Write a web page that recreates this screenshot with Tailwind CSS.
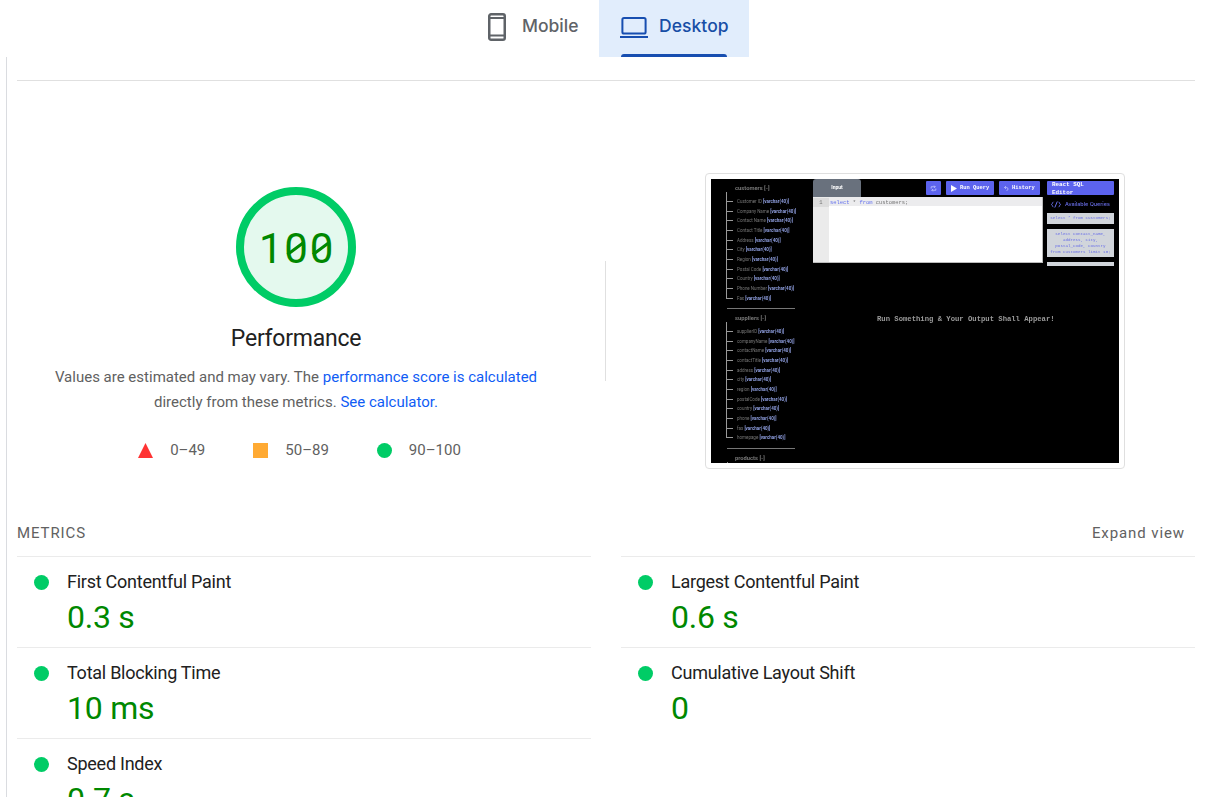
<!DOCTYPE html>
<html lang="en">
<head>
<meta charset="utf-8">
<title>PageSpeed report</title>
<script src="https://cdn.jsdelivr.net/npm/@tailwindcss/browser@4"></script>
</head>
<body class="bg-white h-[797px] overflow-hidden font-['Roboto',sans-serif] text-[#212121]">
<div class="flex h-[797px] flex-col overflow-hidden">
  <nav class="flex h-[57px] shrink-0 pl-[467px] font-['Inter',sans-serif] text-[17.5px] font-medium">
    <div class="flex w-[132px] pl-[21px] text-[#5f6368]">
      <svg class="mt-[13px] h-7 w-[18px]" viewBox="0 0 18 28" fill="none" stroke="currentColor"><rect x="1.25" y="1.25" width="15.5" height="25.5" rx="1.8" stroke-width="2.5"/><path d="M1 5h16M1 22.6h16" stroke-width="2"/></svg>
      <span class="ml-4 mt-[13px] leading-[26px]">Mobile</span>
    </div>
    <div class="flex w-[150px] flex-col justify-between bg-[#e1edfc] text-[#174ea6]">
      <div class="flex pl-[21px] pt-[13px]">
        <svg class="mt-1 h-[22px] w-7" viewBox="0 0 28 22" fill="none" stroke="#174eb0" stroke-width="2"><rect x="2.4" y="1" width="23.2" height="15.6" rx="1.6"/><path d="M0 20h28"/></svg>
        <span class="ml-[11px] leading-[26px] tracking-[0.05px]">Desktop</span>
      </div>
      <div class="ml-[22px] h-[3px] w-[106px] rounded-t-[3px] bg-[#174eb0]"></div>
    </div>
  </nav>

  <main class="ml-[6px] flex-1 border-l border-[#dadce0] pl-[10px]">
    <div class="mt-[23px] w-[1178px] border-t border-[#e0e0e0]"></div>
    <section class="flex h-[444px]">
      <div class="flex w-[558px] flex-col items-center pt-[106px]">
        <div class="relative flex size-[120px] items-center justify-center rounded-full border-8 border-[#00cc66] bg-[#e4f9ee] pl-[2px] pt-[3px] text-[42px] leading-none tracking-[1.8px] text-[#008800]">100
          <svg class="absolute inset-0 size-[104px]" viewBox="0 0 104 104" stroke="#080" stroke-width="3"><path d="M43.5 59.5 59 48M69 59.5 84.5 48"/></svg>
        </div>
        <h1 class="mt-[18px] text-[23px] leading-[28px] tracking-[-0.25px]">Performance</h1>
        <p class="mt-[12px] text-center text-[15px] leading-[25px] text-[#616161]">Values are estimated and may vary. The <a class="text-[#0f5cf5]">performance score is calculated</a><br>directly from these metrics. <a class="text-[#0f5cf5]">See calculator.</a></p>
        <div class="mt-[22px] flex gap-12 pl-[7px] text-[15px] leading-[26px] text-[#616161]">
          <div class="flex items-center gap-[17px]"><svg class="size-[15px]" viewBox="0 0 15 15"><path d="M7.5 0 15 15H0z" fill="#f33"/></svg>0–49</div>
          <div class="flex items-center gap-[17px]"><span class="size-[15px] bg-[#ffaa33]"></span>50–89</div>
          <div class="flex items-center gap-[17px]"><span class="size-[15px] rounded-full bg-[#00cc66]"></span>90–100</div>
        </div>
      </div>
      <div class="ml-[30px] mt-[180px] h-[120px] w-px bg-[#e0e0e0]"></div>
      <div class="ml-[99px] mt-[92px] h-[296px] w-[420px] rounded border border-[#dfdfdf] p-[5px]">
        <div class="h-[284px] w-[408px] overflow-hidden bg-black">
        <div class="flex h-[284px] blur-[0.35px]">
          <aside class="w-[102px] shrink-0 pl-[15px] pt-[5px] font-['Roboto',sans-serif] text-[#777]">
            <div class="pl-[9px] text-[5.8px] font-bold leading-[8px]">customers [-]</div>
            <div id="customers" class="flex h-[115px] flex-col pt-[5px]"></div>
            <div class="ml-px mt-px h-px w-[68px] bg-[#777]"></div>
            <div class="mt-[5px] pl-[9px] text-[5.8px] font-bold leading-[8px]">suppliers [-]</div>
            <div id="suppliers" class="flex h-[121px] flex-col pt-[5px]"></div>
            <div class="ml-px mt-[5px] h-px w-[68px] bg-[#777]"></div>
            <div class="mt-[5px] pl-[9px] text-[5.8px] font-bold leading-[8px]">products [-]</div>
            <div class="ml-[1px] h-1 w-px bg-[#888]"></div>
          </aside>
          <div class="w-[230px] shrink-0 font-['Liberation_Mono',monospace]">
            <div class="flex h-[18px] text-[5.4px] font-bold text-white">
              <div class="flex w-12 items-center justify-center rounded-t-[3px] bg-[#69717d] font-['Roboto',sans-serif] text-[5px]">Input</div>
              <div class="ml-[65px] mt-[2px] flex h-[14px] w-[15px] items-center justify-center rounded-[1px] bg-[#5c63ee]"><svg class="size-[7px]" viewBox="0 0 12 12" fill="none" stroke="#c8ccff" stroke-width="1.3"><path d="M2 6V3h7M7 1l2 2-2 2M10 6v3H3M5 7 3 9l2 2"/></svg></div>
              <div class="ml-[5px] mt-[2px] flex h-[14px] w-12 items-center gap-[3px] rounded-[1px] bg-[#5c63ee] pl-[5px] whitespace-nowrap"><svg class="h-[7px] w-[6px]" viewBox="0 0 6 7"><path d="M0 0l6 3.5L0 7z" fill="#fff"/></svg>Run Query</div>
              <div class="ml-[5px] mt-[2px] flex h-[14px] w-[41px] items-center gap-[3px] rounded-[1px] bg-[#5c63ee] pl-[5px]"><svg class="size-[5px]" viewBox="0 0 10 10" fill="none" stroke="#c8ccff" stroke-width="1.4"><path d="M4 0 1 3l3 3M1 3h4a3 3 0 0 1 0 6"/></svg>History</div>
            </div>
            <div class="flex h-[66px] border-r border-b border-[#bbb] bg-white text-[5.45px]">
              <div class="w-4 bg-[#ebebeb] text-center leading-[9px] text-[#777]"><div class="mt-px bg-[#dcdcdc]">1</div></div>
              <div class="flex-1"><div class="h-[9px] whitespace-pre bg-[#ececee] pl-px pt-px leading-[9px] text-[#777]"><span class="text-[#6673ee]">select</span> * <span class="text-[#6673ee]">from</span> customers;</div></div>
            </div>
            <div class="mt-[51px] whitespace-nowrap pl-[64px] text-[7.23px] font-bold leading-[10px] text-[#9b9b9b]">Run Something &amp; Your Output Shall Appear!</div>
          </div>
          <div class="ml-1 mt-[2px] w-[67px] font-['Liberation_Mono',monospace] text-[4.2px] text-[#686ee8]">
            <div class="h-[14px] overflow-hidden rounded-[1px] bg-[#5c63ee] pl-[5px] text-[5.9px] font-bold leading-[8px] text-white"><div class="-mt-[0.5px]">React SQL<br>Editor</div></div>
            <div class="mt-[4px] flex h-[10px] items-center gap-[4px] whitespace-nowrap pl-[4px] font-['Inter',sans-serif] text-[5.4px] font-medium"><svg class="h-[7px] w-[10px]" viewBox="0 0 10 7" fill="none" stroke="currentColor"><path d="M2.5.8C.8 2 1.8 3 .5 3.5 1.8 4 .8 5 2.5 6.2M7.5.8C9.2 2 8.2 3 9.5 3.5 8.2 4 9.2 5 7.5 6.2M6.3.5 3.8 6.5"/></svg>Available Queries</div>
            <div class="mt-[4px] h-[11px] whitespace-nowrap bg-[#d1d5db] text-center leading-[11px]">select * from customers;</div>
            <div class="mt-[5px] h-[28px] whitespace-nowrap bg-[#d1d5db] pt-[2px] text-center leading-[6px]">select contact_name,<br>address, city,<br>postal_code, country<br>from customers limit 10;</div>
            <div class="mt-[5px] h-1 bg-[#d1d5db]"></div>
          </div>
        </div>
        </div>
      </div>
    </section>

    <div class="flex h-[31px] w-[1178px] justify-between pr-[10px] text-[15px] leading-[16px] text-[#616161]">
      <span class="tracking-[0.9px]">METRICS</span><span class="tracking-[0.9px]">Expand view</span>
    </div>
    <section class="grid w-[1178px] grid-cols-[574px_574px] gap-x-[30px] text-[18px] tracking-[-0.25px]">
      <div class="flex h-[91px] border-t border-[#ebebeb] pl-[17px] pt-[12px]"><span class="mt-[6px] size-[15px] rounded-full bg-[#00cc66]"></span><div class="ml-[18px]"><div class="leading-[26px]">First Contentful Paint</div><div class="mt-[2px] text-[32px] leading-[40px] text-[#008800]">0.3 s</div></div></div>
      <div class="flex h-[91px] border-t border-[#ebebeb] pl-[17px] pt-[12px]"><span class="mt-[6px] size-[15px] rounded-full bg-[#00cc66]"></span><div class="ml-[18px]"><div class="leading-[26px]">Largest Contentful Paint</div><div class="mt-[2px] text-[32px] leading-[40px] text-[#008800]">0.6 s</div></div></div>
      <div class="flex h-[91px] border-t border-[#ebebeb] pl-[17px] pt-[12px]"><span class="mt-[6px] size-[15px] rounded-full bg-[#00cc66]"></span><div class="ml-[18px]"><div class="leading-[26px]">Total Blocking Time</div><div class="mt-[2px] text-[32px] leading-[40px] text-[#008800]">10 ms</div></div></div>
      <div class="flex h-[91px] border-t border-[#ebebeb] pl-[17px] pt-[12px]"><span class="mt-[6px] size-[15px] rounded-full bg-[#00cc66]"></span><div class="ml-[18px]"><div class="leading-[26px]">Cumulative Layout Shift</div><div class="mt-[2px] text-[32px] leading-[40px] text-[#008800]">0</div></div></div>
      <div class="flex h-[91px] border-t border-[#ebebeb] pl-[17px] pt-[12px]"><span class="mt-[6px] size-[15px] rounded-full bg-[#00cc66]"></span><div class="ml-[18px]"><div class="leading-[26px]">Speed Index</div><div class="mt-[2px] text-[32px] leading-[40px] text-[#008800]">0.7 s</div></div></div>
    </section>
  </main>
</div>
<script>
const tables = {
  customers: ['Customer ID','Company Name','Contact Name','Contact Title','Address','City','Region','Postal Code','Country','Phone Number','Fax'],
  suppliers: ['supplierID','companyName','contactName','contactTitle','address','city','region','postalCode','country','phone','fax','homepage']
};
// Each field hangs off the vertical line; the last one ends it at mid-row.
for (const [id, fields] of Object.entries(tables)) {
  document.getElementById(id).innerHTML = fields.map((f) =>
    `<div class="flex h-[9.68px] shrink-0 whitespace-nowrap text-[4.5px] leading-[9.68px] text-[#777]"><div class="mr-[4px] flex w-[7px] flex-col"><div class="-mt-[5px] h-[10px] border-b border-l border-[#999]"></div></div><span>${f} <b class="font-bold text-[#8f9fe0]">[varchar(40)]</b></span></div>`).join('');
}
</script>
</body>
</html>
